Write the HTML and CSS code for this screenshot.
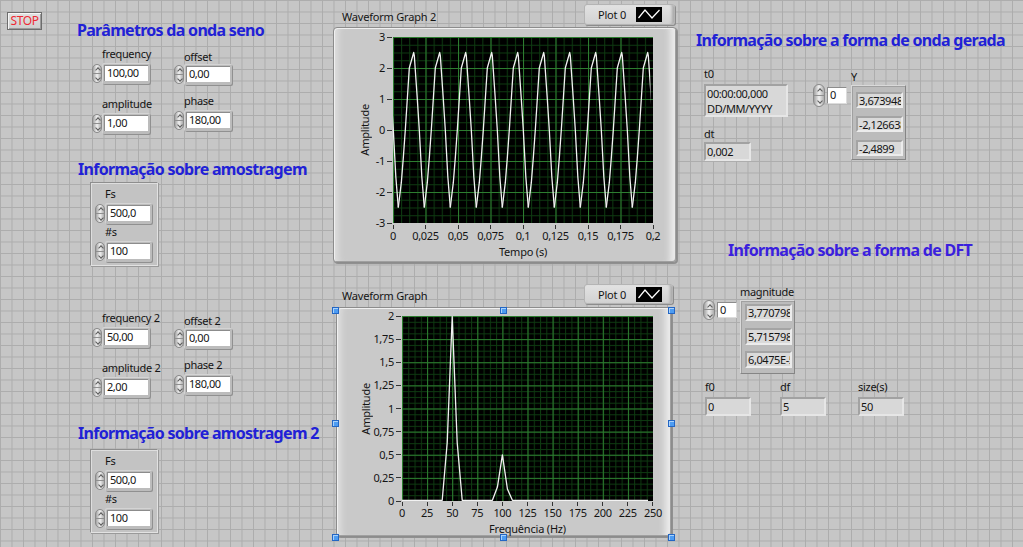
FILE: index.html
```html
<!DOCTYPE html>
<html lang="pt">
<head>
<meta charset="utf-8">
<title>Front Panel</title>
<link rel="stylesheet" href="styles.css">
</head>
<body>
<main class="panel">
  <button class="stop">STOP</button>

  <section class="grp params1">
    <h2 class="ttl">Parâmetros da onda seno</h2>
    <div class="ctrls">
      <div class="num"><span class="lbl">frequency</span><div class="row"><span class="spin"></span><span class="fw"><span class="fld">100,00</span></span></div></div>
      <div class="num lo"><span class="lbl">offset</span><div class="row"><span class="spin"></span><span class="fw"><span class="fld">0,00</span></span></div></div>
      <div class="num"><span class="lbl">amplitude</span><div class="row"><span class="spin"></span><span class="fw"><span class="fld">1,00</span></span></div></div>
      <div class="num hi"><span class="lbl">phase</span><div class="row"><span class="spin"></span><span class="fw"><span class="fld">180,00</span></span></div></div>
    </div>
  </section>

  <section class="grp samp1">
    <h2 class="ttl">Informação sobre amostragem</h2>
    <div class="clu">
      <span class="lbl">Fs</span>
      <div class="row"><span class="spin"></span><span class="fw"><span class="fld">500,0</span></span></div>
      <span class="lbl l2">#s</span>
      <div class="row"><span class="spin"></span><span class="fw"><span class="fld">100</span></span></div>
    </div>
  </section>

  <section class="grp params2">
    <div class="ctrls c2">
      <div class="num"><span class="lbl">frequency 2</span><div class="row"><span class="spin"></span><span class="fw"><span class="fld">50,00</span></span></div></div>
      <div class="num lo"><span class="lbl">offset 2</span><div class="row"><span class="spin"></span><span class="fw"><span class="fld">0,00</span></span></div></div>
      <div class="num"><span class="lbl">amplitude 2</span><div class="row"><span class="spin"></span><span class="fw"><span class="fld">2,00</span></span></div></div>
      <div class="num hi"><span class="lbl">phase 2</span><div class="row"><span class="spin"></span><span class="fw"><span class="fld">180,00</span></span></div></div>
    </div>
  </section>

  <section class="grp samp2">
    <h2 class="ttl">Informação sobre amostragem 2</h2>
    <div class="clu">
      <span class="lbl">Fs</span>
      <div class="row"><span class="spin"></span><span class="fw"><span class="fld">500,0</span></span></div>
      <span class="lbl l2">#s</span>
      <div class="row"><span class="spin"></span><span class="fw"><span class="fld">100</span></span></div>
    </div>
  </section>

  <!-- Graph 1 -->
  <section class="grp graph g1">
    <div class="ghead">
      <span class="gname">Waveform Graph 2</span>
      <div class="legend"><span>Plot 0</span><svg class="swatch" width="26" height="15" viewBox="0 0 26 15"><rect width="26" height="15" fill="#000"/><polyline points="2.5,11 9,3 16,11 23.5,3" fill="none" stroke="#fff" stroke-width="1.2"/></svg></div>
    </div>
    <div class="gframe">
      <div class="yaxis">
        <span class="ytitle">Amplitude</span>
        <div class="yticks">
          <span class="yt">3<i></i></span><span class="yt">2<i></i></span><span class="yt">1<i></i></span><span class="yt">0<i></i></span><span class="yt">-1<i></i></span><span class="yt">-2<i></i></span><span class="yt">-3<i></i></span>
        </div>
      </div>
      <div class="plot">
        <svg width="260" height="186" viewBox="0 0 260 186">
          <defs>
            <pattern id="mi1" width="8.125" height="7.75" patternUnits="userSpaceOnUse"><rect width="1" height="7.75" fill="#0e3a11"/><rect width="8.125" height="1" fill="#0e3a11"/></pattern>
            <pattern id="ma1" width="32.5" height="31" patternUnits="userSpaceOnUse"><rect width="1" height="31" fill="#2d7d30"/><rect width="32.5" height="1" fill="#2d7d30"/></pattern>
            <clipPath id="c1"><rect width="257.5" height="186"/></clipPath>
            <path id="per" d="M0 170.5 L3 145.7 L5 120.9 L7 93 L9 62 L11 31 L15.4 15.5 L16 18.6 L19 62 L21 93 L23.5 139.5 L26 170.5"/>
          </defs>
          <rect width="260" height="186" fill="#000"/>
          <rect width="260" height="186" fill="url(#mi1)"/>
          <rect width="260" height="186" fill="url(#ma1)"/>
          <g fill="none" stroke="#f2f2f2" stroke-width="1.3" stroke-linejoin="round" clip-path="url(#c1)">
            <use href="#per" x="-20.7"/><use href="#per" x="5.3"/><use href="#per" x="31.3"/><use href="#per" x="57.3"/><use href="#per" x="83.3"/><use href="#per" x="109.3"/><use href="#per" x="135.3"/><use href="#per" x="161.3"/><use href="#per" x="187.3"/><use href="#per" x="213.3"/><use href="#per" x="239.3"/>
          </g>
        </svg>
      </div>
      <div class="xticks">
        <span class="xt"><i></i>0</span><span class="xt"><i></i>0,025</span><span class="xt"><i></i>0,05</span><span class="xt"><i></i>0,075</span><span class="xt"><i></i>0,1</span><span class="xt"><i></i>0,125</span><span class="xt"><i></i>0,15</span><span class="xt"><i></i>0,175</span><span class="xt"><i></i>0,2</span>
      </div>
      <div class="xtitle">Tempo (s)</div>
    </div>
  </section>

  <!-- Graph 2 -->
  <section class="grp graph g2">
    <div class="ghead">
      <span class="gname">Waveform Graph</span>
      <div class="legend"><span>Plot 0</span><svg class="swatch" width="26" height="15" viewBox="0 0 26 15"><rect width="26" height="15" fill="#000"/><polyline points="2.5,11 9,3 16,11 23.5,3" fill="none" stroke="#fff" stroke-width="1.2"/></svg></div>
    </div>
    <div class="gframe">
      <div class="yaxis">
        <span class="ytitle">Amplitude</span>
        <div class="yticks">
          <span class="yt">2<i></i></span><span class="yt">1,75<i></i></span><span class="yt">1,5<i></i></span><span class="yt">1,25<i></i></span><span class="yt">1<i></i></span><span class="yt">0,75<i></i></span><span class="yt">0,5<i></i></span><span class="yt">0,25<i></i></span><span class="yt">0<i></i></span>
        </div>
      </div>
      <div class="plot">
        <svg width="251" height="185" viewBox="0 0 251 185">
          <defs>
            <pattern id="mi2" width="6.275" height="5.78125" patternUnits="userSpaceOnUse"><rect width="1" height="5.78125" fill="#0e3a11"/><rect width="6.275" height="1" fill="#0e3a11"/></pattern>
            <pattern id="ma2" width="25.1" height="23.125" patternUnits="userSpaceOnUse"><rect width="1" height="23.125" fill="#2d7d30"/><rect width="25.1" height="1" fill="#2d7d30"/></pattern>
          </defs>
          <rect width="251" height="185" fill="#000"/>
          <rect width="251" height="185" fill="url(#mi2)"/>
          <rect width="251" height="185" fill="url(#ma2)"/>
          <polyline points="0,184.3 40.2,184.3 45.2,126.7 50.2,0.6 55.2,126.7 60.2,184.3 90.4,184.3 95.4,171.1 100.4,138.8 105.4,173 110.4,184.3 246,184.3" fill="none" stroke="#f2f2f2" stroke-width="1.3" stroke-linejoin="round"/>
        </svg>
      </div>
      <div class="xticks">
        <span class="xt"><i></i>0</span><span class="xt"><i></i>25</span><span class="xt"><i></i>50</span><span class="xt"><i></i>75</span><span class="xt"><i></i>100</span><span class="xt"><i></i>125</span><span class="xt"><i></i>150</span><span class="xt"><i></i>175</span><span class="xt"><i></i>200</span><span class="xt"><i></i>225</span><span class="xt"><i></i>250</span>
      </div>
      <div class="xtitle">Frequência (Hz)</div>
    </div>
    <div class="sel">
      <span class="h tl"></span><span class="h tc"></span><span class="h tr"></span>
      <span class="h ml"></span><span class="h mr"></span>
      <span class="h bl"></span><span class="h bc"></span><span class="h br"></span>
    </div>
  </section>

  <!-- Waveform info -->
  <section class="grp wave">
    <h2 class="ttl">Informação sobre a forma de onda gerada</h2>
    <div class="wbody">
      <div class="colA">
        <span class="lbl0">t0</span>
        <div class="ind ts">00:00:00,000<br>DD/MM/YYYY</div>
        <span class="lbl0 dtl">dt</span>
        <div class="ind w45">0,002</div>
      </div>
      <div class="idx big"><span class="spin"></span><span class="ibox">0</span></div>
      <div class="colC">
        <span class="lbl0">Y</span>
        <div class="arr ya">
          <span class="el">3,6739486</span>
          <span class="el">-2,126638</span>
          <span class="el">-2,4899</span>
        </div>
      </div>
    </div>
  </section>

  <!-- DFT info -->
  <section class="grp dft">
    <h2 class="ttl violet">Informação sobre a forma de DFT</h2>
    <div class="dbody1">
      <div class="idx"><span class="spin"></span><span class="ibox">0</span></div>
      <div class="colM">
        <span class="lbl0">magnitude</span>
        <div class="arr ma">
          <span class="el">3,770798</span>
          <span class="el">5,715798</span>
          <span class="el">6,0475E-5</span>
        </div>
      </div>
    </div>
    <div class="dbody2">
      <div class="item"><span class="lbl0">f0</span><div class="ind">0</div></div>
      <div class="item"><span class="lbl0">df</span><div class="ind">5</div></div>
      <div class="item"><span class="lbl0">size(s)</span><div class="ind">50</div></div>
    </div>
  </section>
</main>
</body>
</html>
```

FILE: styles.css
```css
* { box-sizing: border-box; }

body {
  margin: 0;
  width: 1023px;
  height: 547px;
  overflow: hidden;
  font-family: "Noto Sans", "DejaVu Sans", sans-serif;
  font-size: 11px;
  color: #141414;
}

.panel {
  position: relative;
  width: 1023px;
  height: 547px;
  background-color: #c6c6c6;
  background-image:
    linear-gradient(to right, #acacac 1px, transparent 1px),
    linear-gradient(to bottom, #acacac 1px, transparent 1px);
  background-size: 11.5px 11.5px;
}

.grp { position: absolute; }

.ttl {
  margin: 0;
  font-size: 16px;
  font-weight: 700;
  line-height: 20px;
  color: #2121d6;
  letter-spacing: -0.7px;
  white-space: nowrap;
}
.ttl.violet { color: #3a20de; }

/* STOP button */
.stop {
  position: absolute;
  left: 7px;
  top: 12px;
  width: 35px;
  height: 18px;
  padding: 0;
  font-family: "Noto Sans", sans-serif;
  font-size: 12px;
  line-height: 14px;
  letter-spacing: -0.4px;
  color: #ee2a33;
  background: linear-gradient(#e2e2e2, #cdcdcd);
  border: 1px solid #6c6c6c;
  box-shadow: inset 1px 1px 0 #f6f6f6, inset -1px -1px 0 #9a9a9a;
}

/* numeric controls */
.ctrls {
  display: grid;
  grid-template-columns: 82px 60px;
  row-gap: 12px;
}
.params1 { left: 77px; top: 20px; }
.params1 .ctrls { margin-top: 7px; padding-left: 15px; }
.params2 { left: 92px; top: 311px; }

.num { display: flex; flex-direction: column; }
.num.lo { margin-top: 1px; }
.num.lo .lbl { margin-top: 2px; margin-bottom: 0; }
.num.hi { margin-top: -3.5px; }

.lbl {
  line-height: 14px;
  margin-left: 10px;
  margin-bottom: 2px;
  white-space: nowrap;
  letter-spacing: -0.3px;
}

.row { display: flex; align-items: center; }

.spin {
  position: relative;
  flex: none;
  width: 10px;
  height: 19px;
  border: 1px solid #8a8a8a;
  border-radius: 5px;
  background:
    linear-gradient(to bottom, transparent 8px, #8f8f8f 8px, #8f8f8f 9px, transparent 9px),
    linear-gradient(to right, #a2a2a2, #f1f1f1 50%, #acacac);
}
.spin::before,
.spin::after {
  content: "";
  position: absolute;
  left: 2.5px;
  width: 3px;
  height: 3px;
  border-left: 1px solid #5a5a5a;
  border-top: 1px solid #5a5a5a;
  transform: rotate(45deg);
}
.spin::before { top: 3px; }
.spin::after { top: 11px; transform: rotate(225deg); }

.fw {
  display: block;
  padding: 2px 2px 3px 2px;
  background: #bcbcbc;
  border-radius: 2px;
  box-shadow: 1px 1px 0 #909090, inset 1px 1px 0 #d4d4d4;
}
.fld {
  display: block;
  width: 44px;
  height: 16px;
  padding-left: 2px;
  line-height: 14px;
  background: #fff;
  border-top: 1px solid #8c8c8c;
  border-left: 1px solid #8c8c8c;
  letter-spacing: -0.45px;
  white-space: nowrap;
  overflow: hidden;
}

/* clusters */
.samp1 { left: 78px; top: 158.5px; }
.samp2 { left: 78px; top: 423px; }
.samp1 .clu { margin-top: 3.5px; }
.samp2 .clu { margin-top: 6px; }

.clu {
  display: flex;
  flex-direction: column;
  align-items: flex-start;
  width: 68px;
  margin-left: 12px;
  padding: 3.5px 3px 3px 4px;
  background: #c3c3c3;
  border: 1px solid;
  border-color: #8e8e8e #e2e2e2 #e2e2e2 #8e8e8e;
  box-shadow: 1px 1px 0 #9a9a9a, inset 1px 1px 0 #dedede;
}
.clu .lbl.l2 { margin-top: 1px; }
.clu .fld { width: 43px; }

/* graphs */
.graph { display: flex; flex-direction: column; }
.g1 { left: 333px; top: 4px; width: 344px; }
.g2 { left: 336px; top: 284px; width: 336px; }

.ghead { display: flex; height: 23px; }
.gname { line-height: 14px; letter-spacing: -0.2px; white-space: nowrap; }
.g1 .gname { padding: 6px 0 0 9px; }
.g2 .gname { padding: 5px 0 0 6px; }

.legend {
  display: flex;
  align-items: center;
  margin-left: auto;
  width: 91px;
  height: 21px;
  padding-left: 13px;
  gap: 10px;
  background: linear-gradient(#e2e2e2, #d2d2d2);
  border-radius: 3px;
  border: 1px solid #b4b4b4;
  box-shadow: 1px 1px 0 #8c8c8c, inset -4px 0 3px -2px #a8a8a8;
  letter-spacing: -0.2px;
}
.g1 .legend { margin-right: 2px; }
.g2 .legend { margin-right: -1px; width: 89px; height: 20px; }
.swatch { display: block; flex: none; }

.gframe {
  display: grid;
  background: #c9c9c9;
  border: 1px solid #8c8c8c;
  border-radius: 4px;
  box-shadow:
    inset 1px 1px 0 #f0f0f0,
    inset -1px -1px 0 #a0a0a0,
    inset 8px 0 6px -4px #e0e0e0,
    inset -12px 0 6px -6px #ececec,
    1px 1px 0 #909090;
}
.g1 .gframe {
  grid-template-columns: 59px 260px;
  grid-template-rows: 186px auto auto;
  padding: 9px 24px 3px 0;
}
.g2 .gframe {
  grid-template-columns: 65px 251px;
  grid-template-rows: 185px auto auto;
  padding: 8px 19px 0 0;
}

.yaxis { display: flex; align-items: center; min-height: 0; }
.ytitle {
  writing-mode: vertical-rl;
  transform: rotate(180deg);
  line-height: 14px;
  letter-spacing: -0.2px;
}
.g1 .ytitle { margin-left: 24px; }
.g2 .ytitle { margin-left: 22px; }

.yticks {
  display: flex;
  flex-direction: column;
  margin-left: auto;
  flex: none;
}
.g1 .yticks { height: 217px; }
.g2 .yticks { height: 208.125px; }
.yt {
  display: flex;
  align-items: center;
  justify-content: flex-end;
  flex: none;
  line-height: 14px;
  letter-spacing: -0.3px;
}
.g1 .yt { height: 31px; }
.g2 .yt { height: 23.125px; }
.yt i {
  display: block;
  width: 5px;
  height: 1px;
  margin: 0 1px 0 2px;
  background: #333;
}

.plot { display: block; }
.plot svg { display: block; }

.xticks { display: flex; grid-column: 2; }
.g1 .xticks { margin-left: -16.25px; }
.g2 .xticks { margin-left: -12.55px; }
.xt {
  display: flex;
  flex-direction: column;
  align-items: center;
  flex: none;
  line-height: 14px;
  letter-spacing: -0.3px;
}
.g1 .xt { width: 32.5px; }
.g2 .xt { width: 25.1px; }
.xt i {
  display: block;
  width: 1px;
  height: 4px;
  background: #333;
}
.g1 .xt i { margin-top: 2px; }
.g2 .xt i { margin-top: 1px; }

.xtitle {
  grid-column: 2;
  text-align: center;
  line-height: 14px;
  letter-spacing: -0.2px;
}
.g1 .xtitle { margin-top: 1.5px; }
.g2 .xtitle { margin-top: 2px; }

/* selection handles */
.sel {
  position: absolute;
  left: -1px;
  top: 26px;
  width: 336.5px;
  height: 227.5px;
  pointer-events: none;
}
.h {
  position: absolute;
  width: 7px;
  height: 7px;
  margin: -3.5px 0 0 -3.5px;
  background: #4d9cf2;
  border: 1px solid #2366c4;
  box-shadow: inset 1px 1px 0 #a9d2fb;
}
.tl { left: 0; top: 0; }
.tc { left: 50%; top: 0; }
.tr { left: 100%; top: 0; }
.ml { left: 0; top: 50%; }
.mr { left: 100%; top: 50%; }
.bl { left: 0; top: 100%; }
.bc { left: 50%; top: 100%; }
.br { left: 100%; top: 100%; }

/* indicators */
.lbl0 {
  display: block;
  line-height: 14px;
  white-space: nowrap;
  letter-spacing: -0.3px;
}
.ind {
  display: block;
  width: 46px;
  height: 19px;
  padding: 0 0 0 1px;
  line-height: 15px;
  background: #d8d8d8;
  border: 2px solid;
  border-color: #a2a2a2 #e6e6e6 #e6e6e6 #a2a2a2;
  letter-spacing: -0.4px;
  white-space: nowrap;
  overflow: hidden;
}
.ind.ts {
  width: 84px;
  height: 33px;
  margin-top: 3px;
  padding-top: 0;
}
.ind.w45 { width: 47px; margin-top: 1px; }

.wave { left: 696px; top: 30px; }
.wbody { display: flex; margin-top: 17px; }
.colA { margin-left: 8px; width: 84px; }
.colA .dtl { margin-top: 10px; }

.idx { display: flex; align-items: center; }
.idx .spin { width: 12px; height: 20px; border-radius: 6px; }
.idx.big .spin { height: 23px; }
.idx .spin::before { left: 3.5px; top: 4px; }
.idx .spin::after { left: 3.5px; top: 12px; }
.idx.big .spin::after { top: 14px; }
.idx.big .spin {
  background:
    linear-gradient(to bottom, transparent 10px, #8f8f8f 10px, #8f8f8f 11px, transparent 11px),
    linear-gradient(to right, #a2a2a2, #f1f1f1 50%, #acacac);
}
.ibox {
  display: block;
  width: 20px;
  height: 16px;
  margin-left: 2px;
  padding-left: 2px;
  line-height: 14px;
  background: #fff;
  border: 1px solid #8c8c8c;
  border-right-color: #dcdcdc;
  border-bottom-color: #dcdcdc;
}
.wave .idx { margin-left: 25px; margin-top: 17px; align-self: flex-start; }
.wave .ibox { height: 17px; }
.colC { margin-left: 4px; }
.colC .lbl0 { margin-top: 3px; }

.arr {
  display: flex;
  flex-direction: column;
  width: 55px;
  background: #bcbcbc;
  border: 1px solid;
  border-color: #dadada #858585 #858585 #dadada;
  box-shadow: inset 1px 1px 0 #a0a0a0;
}
.arr.ya { margin-top: 1px; height: 75px; padding: 6px 3px 3px 4px; gap: 7.5px; }
.arr.ma { margin-top: 1px; height: 74px; padding: 3px 3px 5px 4px; gap: 6.5px; }
.el {
  display: block;
  width: 47px;
  height: 17px;
  padding-left: 1px;
  line-height: 13px;
  background: #dadada;
  border: 2px solid;
  border-color: #a4a4a4 #ececec #ececec #a4a4a4;
  letter-spacing: -0.4px;
  white-space: nowrap;
  overflow: hidden;
}

.dft { left: 703px; top: 240px; }
.dft .ttl { margin-left: 25px; }
.dbody1 { display: flex; margin-top: 25px; }
.dft .idx { margin-top: 15px; align-self: flex-start; }
.dft .ibox { height: 16px; }
.colM { margin-left: 3px; }
.dbody2 {
  display: grid;
  grid-template-columns: 75px 78px 47px;
  margin-top: 6px;
  margin-left: 2px;
}
.item .ind { margin-top: 3px; }
```
